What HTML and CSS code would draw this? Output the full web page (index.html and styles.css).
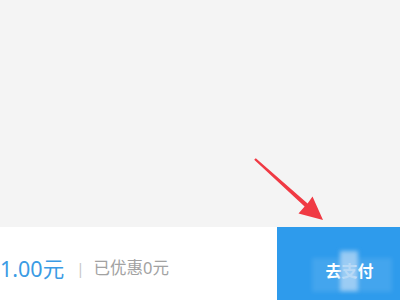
FILE: index.html
```html
<!DOCTYPE html>
<html lang="zh-CN">
<head>
<meta charset="utf-8">
<link rel="stylesheet" href="styles.css">
</head>
<body>
<div class="page">
  <div class="content"></div>
  <div class="bar">
    <div class="info">
      <span class="price">1.00元</span>
      <span class="sep">|</span>
      <span class="discount">已优惠0元</span>
    </div>
    <div class="pay">
      <span class="pay-text">去支付</span>
      <span class="mask mask-wide"></span>
      <span class="mask mask-mid"></span>
    </div>
  </div>
  <svg class="arrow" width="400" height="300" viewBox="0 0 400 300">
    <path d="M255.8 158.2 L307.6 203.4 L312.5 196.5 L323 220 L298.5 213.5 L304.6 206.6 L254.2 159.8 Z" fill="#f03a44"/>
  </svg>
</div>
</body>
</html>
```
FILE: styles.css
```css
html, body {
  margin: 0;
  padding: 0;
}
body {
  font-family: "Noto Sans", "Noto Sans CJK SC", sans-serif;
  background: #f4f4f4;
}
.page {
  position: relative;
  width: 400px;
  height: 300px;
  display: flex;
  flex-direction: column;
  overflow: hidden;
}
.content {
  flex: 1;
  background: #f4f4f4;
}
.bar {
  height: 73px;
  display: flex;
  background: #ffffff;
}
.info {
  flex: 1;
  display: flex;
  align-items: center;
  padding-top: 10px;
}
.price {
  font-size: 21.5px;
  color: #3a9be4;
  line-height: 1;
}
.sep {
  font-size: 15px;
  color: #c8c8c8;
  margin: 0 9px 0 12px;
  line-height: 1;
}
.discount {
  font-size: 16.5px;
  color: #a2a2a2;
  line-height: 1;
}
.pay {
  position: relative;
  width: 123px;
  background: #2e9bec;
  display: flex;
  align-items: center;
  justify-content: center;
  padding-left: 22px;
  box-sizing: border-box;
  padding-top: 14px;
}
.pay-text {
  color: #ffffff;
  font-size: 16px;
  font-weight: bold;
  line-height: 1;
}
.mask {
  position: absolute;
  filter: blur(2px);
}
.mask-wide {
  left: 35px;
  top: 31px;
  width: 80px;
  height: 34px;
  background: rgba(255, 255, 255, 0.1);
}
.mask-mid {
  left: 63px;
  top: 24px;
  width: 18px;
  height: 40px;
  background: rgba(170, 210, 245, 0.85);
}
.arrow {
  position: absolute;
  left: 0;
  top: 0;
  pointer-events: none;
}
```
